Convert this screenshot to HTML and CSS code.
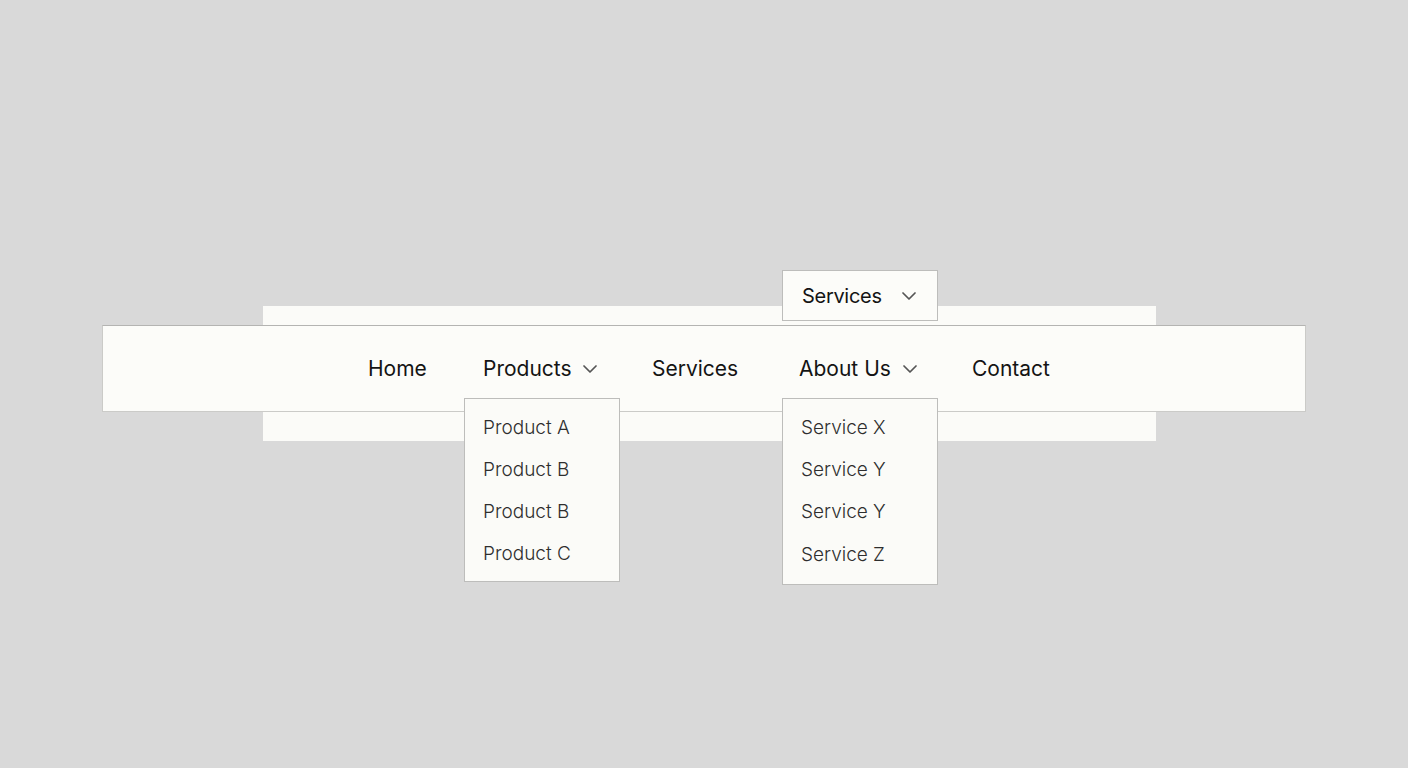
FILE: index.html
```html
<!DOCTYPE html>
<html lang="en">
<head>
<meta charset="utf-8">
<title>Navigation</title>
<link rel="stylesheet" href="styles.css">
</head>
<body>
<div class="panel">
  <nav class="navbar">
    <div class="nav-item home"><span class="label">Home</span></div>
    <div class="nav-item products">
      <span class="label">Products</span>
      <svg class="chev" viewBox="0 0 14 8"><path d="M1 1l6 6 6-6"/></svg>
      <ul class="dropdown dd-products">
        <li>Product A</li>
        <li>Product B</li>
        <li>Product B</li>
        <li>Product C</li>
      </ul>
    </div>
    <div class="nav-item services"><span class="label">Services</span></div>
    <div class="nav-item about">
      <span class="label">About Us</span>
      <svg class="chev" viewBox="0 0 14 8"><path d="M1 1l6 6 6-6"/></svg>
      <div class="tab">
        <span class="tab-label">Services</span>
        <svg class="chev" viewBox="0 0 14 8"><path d="M1 1l6 6 6-6"/></svg>
      </div>
      <ul class="dropdown dd-about">
        <li>Service X</li>
        <li>Service Y</li>
        <li>Service Y</li>
        <li>Service Z</li>
      </ul>
    </div>
    <div class="nav-item contact"><span class="label">Contact</span></div>
  </nav>
</div>
</body>
</html>
```

FILE: styles.css
```css
html, body {
  margin: 0;
  padding: 0;
}

body {
  width: 1408px;
  height: 768px;
  background: #d9d9d9;
  font-family: Inter, "Noto Sans", sans-serif;
  overflow: hidden;
}

/* pale sheet behind the bar */
.panel {
  box-sizing: border-box;
  width: 893px;
  margin: 306px 0 0 263px;
  padding: 19px 0 29px;
  background: #fbfbf8;
}

.navbar {
  box-sizing: border-box;
  display: flex;
  align-items: stretch;
  height: 87px;
  margin: 0 -150px 0 -161px;
  padding-left: 246px;
  background: #fcfcf9;
  border: 1px solid #cbcbc8;
  border-top-color: #b4b4b2;
}

.nav-item {
  position: relative;
  display: flex;
  align-items: center;
  box-sizing: border-box;
  padding-left: 19px;
  font-size: 21px;
  color: #141414;
}

.home { width: 115px; }
.products { width: 169px; }
.services { width: 149px; }
.about { width: 171px; padding-left: 17px; }
.contact { padding-left: 19px; }

.chev {
  width: 14px;
  height: 8px;
  margin-left: 11px;
  fill: none;
  stroke: #555;
  stroke-width: 1.7;
  stroke-linecap: round;
  stroke-linejoin: round;
}

.about .label + .chev { margin-left: 12px; }

.dropdown {
  position: absolute;
  left: 0;
  top: 72px;
  box-sizing: border-box;
  width: 156px;
  margin: 0;
  padding: 8px 0 6px;
  list-style: none;
  background: #fbfbf8;
  border: 1px solid #bdbdbb;
  z-index: 2;
}

.dd-about { padding-bottom: 8px; }

.dropdown li {
  height: 42px;
  line-height: 42px;
  padding-left: 18px;
  font-size: 19px;
  font-weight: 300;
  color: #2e2e2e;
}

.dd-about li:nth-child(n+2) { height: 42.3px; }

/* raised tab above the bar */
.tab {
  position: absolute;
  left: 0;
  top: -56px;
  box-sizing: border-box;
  width: 156px;
  height: 51px;
  display: flex;
  align-items: center;
  padding-left: 19px;
  background: #fcfcf9;
  border: 1px solid #bdbdbb;
  font-size: 20px;
  letter-spacing: -0.3px;
  color: #141414;
}

.tab .chev { margin-left: 20px; }
```
